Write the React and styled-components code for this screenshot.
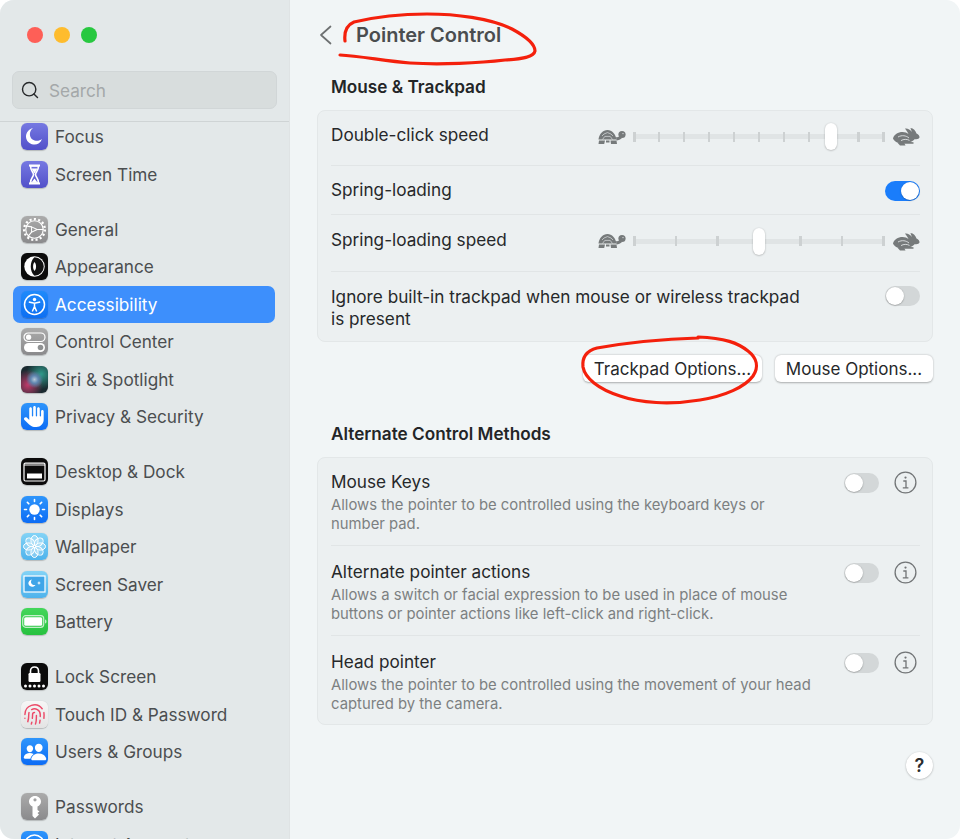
import React from "react";
import styled, { createGlobalStyle } from "styled-components";
import { FaHand } from "react-icons/fa6";
import { IoPeople } from "react-icons/io5";
import { Fingerprint, Search as SearchGlyph } from "lucide-react";

const GlobalStyle = createGlobalStyle`
    html, body {
        margin: 0;
        padding: 0;
        background: #ffffff;
    }
    * {
        box-sizing: border-box;
    }
`;

/// Window ///

const Window = styled.div`
    position: relative;
    width: 960px;
    height: 839px;
    display: flex;
    overflow: hidden;
    border-radius: 14px;
    font-family: Inter, "Liberation Sans", sans-serif;
    background: #f1f5f6;
`;

const Sidebar = styled.aside`
    width: 290px;
    flex: none;
    display: flex;
    flex-direction: column;
    background: #e3e8e9;
    border-right: 1px solid #dfe3e4;
`;

const TrafficLights = styled.div`
    display: flex;
    gap: 11px;
    padding: 27px 0 0 27px;
    height: 71px;
`;

const Light = styled.span`
    width: 16px;
    height: 16px;
    border-radius: 50%;
    background: ${(p) => p.$color};
`;

const SearchBox = styled.div`
    margin: 0 12px;
    width: 265px;
    height: 38px;
    display: flex;
    align-items: center;
    gap: 9px;
    padding-left: 7px;
    background: #d8dddd;
    border: 1px solid #d1d6d7;
    border-radius: 7px;
    color: #a4a8a9;
    font-size: 17.2px;
`;

const SidebarList = styled.nav`
    flex: 1;
    min-height: 0;
    margin-top: 12px;
    overflow: hidden;
    border-top: 1px solid #cfd4d5;
    padding: 0 14px 0 13px;
`;

const Group = styled.div`
    margin-bottom: 17.5px;
    &:first-child {
        margin-top: -3.8px;
    }
`;

const Item = styled.div`
    height: 37.5px;
    display: flex;
    align-items: center;
    gap: 7px;
    padding-left: 8px;
    border-radius: 7px;
    font-size: 17.2px;
    color: ${(p) => (p.$active ? "#ffffff" : "#4b4e50")};
    background: ${(p) => (p.$active ? "#3d8ffc" : "transparent")};
`;

const AppIcon = styled.span`
    width: 27px;
    height: 27px;
    flex: none;
    display: flex;
    align-items: center;
    justify-content: center;
    border-radius: 6px;
    color: #ffffff;
    background: ${(p) => p.$bg};
    box-shadow: 0 0.5px 1px rgba(0, 0, 0, 0.2);
`;

/// Main pane ///

const Main = styled.main`
    flex: 1;
    min-width: 0;
    padding: 0 27px 0 27px;
`;

const TitleBar = styled.header`
    height: 69px;
    margin-bottom: 7px;
    display: flex;
    align-items: center;
    gap: 24px;
    padding-left: 2px;
`;

const Title = styled.h1`
    margin: 0;
    font-size: 20px;
    font-weight: 600;
    color: #4a4d4f;
`;

const SectionTitle = styled.h2`
    margin: 0 0 ${(p) => p.$gap}px 14px;
    font-size: 17.2px;
    line-height: 22px;
    font-weight: 600;
    color: #232527;
`;

const Card = styled.section`
    background: #ecf0f1;
    border: 1px solid #e3e7e8;
    border-radius: 8px;
    padding: 0 12px 0 13px;
`;

const Row = styled.div`
    height: ${(p) => p.$height}px;
    display: flex;
    justify-content: space-between;
    align-items: ${(p) => (p.$top ? "flex-start" : "center")};
    padding-top: ${(p) => p.$pad || 0}px;
    padding-bottom: ${(p) => p.$lift || 0}px;
    border-bottom: ${(p) => (p.$last ? "none" : "1px solid #e1e5e6")};
`;

const RowLabel = styled.div`
    font-size: 17.2px;
    line-height: 22px;
    color: #26282a;
    width: ${(p) => p.$width || "auto"};
    margin-bottom: ${(p) => p.$raise || 0}px;
`;

const RowDesc = styled.div`
    margin-top: 3px;
    font-size: 14.85px;
    line-height: 18.5px;
    color: #7c8081;
    width: 490px;
`;

const SliderWrap = styled.div`
    display: flex;
    align-items: center;
    gap: 7px;
    color: #767a7b;
`;

const Slider = styled.div`
    position: relative;
    width: 252px;
    height: 27px;
    display: flex;
    align-items: center;
    justify-content: space-between;
    &::before {
        content: "";
        position: absolute;
        left: 0;
        right: 0;
        top: 11px;
        height: 5px;
        background: #e0e4e5;
    }
`;

const Tick = styled.span`
    position: relative;
    width: 2.5px;
    height: 10px;
    background: #cdd1d2;
`;

const Thumb = styled.span`
    position: absolute;
    top: 0;
    width: 12px;
    height: 27px;
    margin-left: -6px;
    border-radius: 6px;
    background: #ffffff;
    box-shadow: 0 0.5px 2px rgba(0, 0, 0, 0.3);
`;

const Toggle = styled.span`
    width: 35px;
    height: 20px;
    flex: none;
    display: flex;
    justify-content: ${(p) => (p.$on ? "flex-end" : "flex-start")};
    padding: 1px;
    margin-top: ${(p) => (p.$on ? 2 : 0)}px;
    border-radius: 10px;
    background: ${(p) => (p.$on ? "#1a7dfb" : "#d3d7d8")};
    &::after {
        content: "";
        width: 18px;
        height: 18px;
        border-radius: 50%;
        background: #ffffff;
        box-shadow: 0 0.5px 1.5px rgba(0, 0, 0, 0.35);
    }
`;

const Controls = styled.div`
    display: flex;
    align-items: center;
    gap: 15px;
    margin-right: 3px;
`;

const ButtonRow = styled.div`
    display: flex;
    justify-content: flex-end;
    gap: 13px;
    margin-top: 13px;
    margin-bottom: 41px;
`;

const Button = styled.button`
    height: 27px;
    width: ${(p) => p.$width}px;
    padding: 0;
    border: none;
    border-radius: 6px;
    background: #ffffff;
    box-shadow: 0 0.5px 2px rgba(0, 0, 0, 0.3);
    font-family: inherit;
    font-size: 17px;
    color: #26282a;
`;

const HelpButton = styled.button`
    position: absolute;
    left: 906px;
    top: 752px;
    width: 27px;
    height: 27px;
    padding: 0;
    border: none;
    border-radius: 50%;
    background: #ffffff;
    box-shadow: 0 0.5px 2px rgba(0, 0, 0, 0.3);
    font-family: inherit;
    font-size: 18px;
    font-weight: 600;
    color: #2a2c2e;
`;

const Scribble = styled.svg`
    position: absolute;
    left: 0;
    top: 0;
    pointer-events: none;
`;

/// Drawn icons ///

const BackIcon = () => (
    <svg width="13" height="20" viewBox="0 0 13 20" fill="none" stroke="#6d7071" strokeWidth="1.7" strokeLinecap="round" strokeLinejoin="round">
        <path d="M11.5 1.5 L2 10 L11.5 18.5" />
    </svg>
);

const Turtle = () => (
    <svg width="29" height="16" viewBox="0 0 29 16" fill="currentColor">
        <path d="M1.5 10.5 C2 5 6 1 10.5 1 C15 1 18.5 5 19.5 10.5 Z" />
        <circle cx="25" cy="5.5" r="3.6" />
        <path d="M19 8 C20.5 8.5 22 8 23 7 L25 9 C23.5 10.5 21.5 11.5 19.5 11.5 Z" />
        <path d="M2 11.5 H8 L7.2 15 H1.5 Z M13.5 11.5 H19.5 L20 15 H14 Z M9 11.5 H12.5 V13.5 H9 Z" />
        <path d="M7.8 7.4 L5.5 10.5 M13.2 7.4 L15.5 10.5 M7.8 7.4 H13.2 M7 5 L5 7 M14 5 L16 7 M7 5 L10.5 3.6 L14 5" stroke="#ecf0f1" strokeWidth="0.6" fill="none" />
        <circle cx="26" cy="4.6" r="0.6" fill="#ecf0f1" />
    </svg>
);

const Rabbit = () => (
    <svg width="28" height="19" viewBox="0 0 28 19" fill="currentColor">
        <path d="M1 11.5 C2 7.5 6 5 10.5 5 C13 5 15 5.7 16.5 7 C15.5 5 14 3 13 1.5 C15.5 1 18 2.5 20 5 C19.5 3.5 18.5 2 18.5 1 C21.5 1.2 23.5 3.8 24.5 6.5 C26.5 7.5 27.8 9 27.5 10.5 C27 12 24.5 12.2 22.5 12.2 C21.5 13.7 19.5 14.7 18 15 L21.5 15.2 L21.5 16.8 L12 16.8 C7 16.8 2.5 15 1 11.5 Z" />
        <path d="M5.5 15.8 H12 L13.5 18.5 H8 Z" />
        <path d="M6 10 C10 7.8 14 8.5 17 11 M9 13.6 C11.5 12 15 12 17.5 13.4" stroke="#ecf0f1" strokeWidth="0.8" fill="none" />
    </svg>
);

const InfoIcon = () => (
    <svg width="23" height="23" viewBox="0 0 23 23" fill="none" stroke="#727577" strokeWidth="1.3">
        <circle cx="11.5" cy="11.5" r="10.4" />
        <circle cx="11.5" cy="6.6" r="1.1" fill="#727577" stroke="none" />
        <path d="M9.3 10 H12 V16.6 M8.8 16.8 H14.4" />
    </svg>
);

const Moon = () => (
    <svg width="21" height="21" viewBox="0 0 21 21" fill="#fff">
        <path d="M9 2 C5 5 5 11 8.5 13.5 C11.5 15.5 15.5 15 18 13 C16.5 17 13 19 9.5 18.5 C5 18 2 14.5 2 10.5 C2 6.5 5 3 9 2 Z" />
    </svg>
);

const Hourglass = () => (
    <svg width="19" height="21" viewBox="0 0 19 21" fill="none" stroke="#fff" strokeWidth="1.6">
        <path d="M4 1.5 H15 M4 19.5 H15" strokeWidth="2" />
        <path d="M5.5 2 C5.5 7 8.5 8 8.5 10.5 C8.5 13 5.5 14 5.5 19 H13.5 C13.5 14 10.5 13 10.5 10.5 C10.5 8 13.5 7 13.5 2 Z" />
        <path d="M6.5 4.5 H12.5 L9.5 9.5 Z M6.5 18.5 L9.5 14.5 L12.5 18.5 Z" fill="#fff" stroke="none" />
    </svg>
);

const Gear = () => (
    <svg width="25" height="25" viewBox="0 0 24 24" fill="none" stroke="#fff">
        <circle cx="12" cy="12" r="10" strokeWidth="2.2" strokeDasharray="2 2.2" />
        <circle cx="12" cy="12" r="8.4" strokeWidth="1.1" />
        <path d="M9.2 9.5 L14.6 12 L9.2 14.5 Z" strokeWidth="1" />
        <path d="M3.8 8.5 L9.2 9.5 M9.2 14.5 L5.5 18.8 M14.6 12 H20.4" strokeWidth="1.1" />
    </svg>
);

const AppearanceGlyph = () => (
    <svg width="23" height="23" viewBox="0 0 23 23">
        <circle cx="11.5" cy="11.5" r="10.2" fill="#fff" />
        <path d="M11.5 2.2 A9.3 9.3 0 0 1 11.5 20.8 C6.5 17 6.5 6 11.5 2.2 Z" fill="#111" />
        <path d="M11.5 7 C9.6 9 9.6 14 11.5 16 C13.6 14 13.6 9 11.5 7 Z" fill="#fff" />
    </svg>
);

const AccessGlyph = () => (
    <svg width="23" height="23" viewBox="0 0 23 23" fill="none" stroke="#fff">
        <circle cx="11.5" cy="11.5" r="10" strokeWidth="1.5" />
        <circle cx="11.5" cy="6.5" r="1.7" fill="#fff" stroke="none" />
        <path d="M5.8 9 L11.5 10.2 L17.2 9 M11.5 10.2 V13.5 M11.5 13.5 L9.3 18.5 M11.5 13.5 L13.7 18.5" strokeWidth="1.5" />
    </svg>
);

const Switches = () => (
    <svg width="23" height="22" viewBox="0 0 23 22">
        <rect x="1" y="2" width="21" height="8.5" rx="4.2" fill="none" stroke="#fff" strokeWidth="1.2" />
        <circle cx="5.6" cy="6.2" r="2.6" fill="#fff" />
        <rect x="1" y="12" width="21" height="9" rx="4.5" fill="#fff" />
        <circle cx="17.5" cy="16.5" r="2.8" fill="#8f9192" />
    </svg>
);

const Frame = () => (
    <svg width="23" height="20" viewBox="0 0 23 20" fill="none" stroke="#fff" strokeWidth="1.2">
        <rect x="1" y="1" width="21" height="18" rx="1.5" />
        <rect x="1" y="1" width="21" height="3" fill="#fff" fillOpacity="0.5" stroke="none" />
        <rect x="4" y="11.5" width="15" height="5" fill="#fff" stroke="none" />
    </svg>
);

const Sun = () => (
    <svg width="23" height="23" viewBox="0 0 23 23" fill="none" stroke="#fff" strokeWidth="1.6" strokeLinecap="round">
        <circle cx="11.5" cy="11.5" r="5.2" fill="#fff" stroke="none" />
        <path d="M11.5 1.5 V3.5 M11.5 19.5 V21.5 M1.5 11.5 H3.5 M19.5 11.5 H21.5 M4.4 4.4 L5.8 5.8 M17.2 17.2 L18.6 18.6 M4.4 18.6 L5.8 17.2 M17.2 5.8 L18.6 4.4" />
    </svg>
);

const Flower = () => (
    <svg width="25" height="25" viewBox="0 0 25 25" fill="#ffffff" fillOpacity="0.25" stroke="#fff" strokeWidth="1">
        {[0, 45, 90, 135, 180, 225, 270, 315].map((a) => (
            <ellipse key={a} cx="12.5" cy="6.5" rx="3.6" ry="5" transform={`rotate(${a} 12.5 12.5)`} />
        ))}
    </svg>
);

const SaverGlyph = () => (
    <svg width="23" height="18" viewBox="0 0 23 18">
        <rect x="1" y="1" width="21" height="16" fill="#3fa5e8" stroke="#fff" strokeWidth="1.2" />
        <path d="M9 4.5 C7 6.5 8 10.5 12.5 10 C11 12.5 6.5 12.5 5.5 9 C5 7 7 4.8 9 4.5 Z" fill="#fff" />
        <path d="M16 6 l0.6 1.4 l1.4 0.6 l-1.4 0.6 l-0.6 1.4 l-0.6 -1.4 l-1.4 -0.6 l1.4 -0.6 Z" fill="#fff" />
    </svg>
);

const BatteryGlyph = () => (
    <svg width="25" height="13" viewBox="0 0 25 13">
        <rect x="0.7" y="0.7" width="21" height="11.6" rx="3" fill="none" stroke="#fff" strokeOpacity="0.7" strokeWidth="1.2" />
        <rect x="2.2" y="2.2" width="18" height="8.6" rx="1.6" fill="#fff" />
        <path d="M23 4.5 C24 4.8 24.5 5.5 24.5 6.5 C24.5 7.5 24 8.2 23 8.5 Z" fill="#fff" fillOpacity="0.7" />
    </svg>
);

const LockGlyph = () => (
    <svg width="23" height="24" viewBox="0 0 23 24">
        <path d="M7.5 9 V6 C7.5 3.5 9.3 2 11.5 2 C13.7 2 15.5 3.5 15.5 6 V9" fill="none" stroke="#fff" strokeWidth="1.6" />
        <rect x="5.5" y="8" width="12" height="9" rx="1.2" fill="#fff" />
        {[2.5, 7, 11.5, 16, 20.5].map((x) => (
            <circle key={x} cx={x} cy="21" r="1.5" fill="#fff" />
        ))}
    </svg>
);

const KeyGlyph = () => (
    <svg width="18" height="24" viewBox="0 0 18 24" fill="#fff">
        <path fillRule="evenodd" d="M9 1 C12.5 1 15 3.5 15 6.5 C15 9 13.5 10.5 11.5 11.5 V15 L13.5 16.5 L11.5 18 L13 19.5 L9 23.5 L6.5 21 V11.5 C4.5 10.5 3 9 3 6.5 C3 3.5 5.5 1 9 1 Z M9 3.2 A1.6 1.6 0 1 0 9 6.4 A1.6 1.6 0 1 0 9 3.2 Z" />
    </svg>
);

const AtGlyph = () => (
    <svg width="23" height="23" viewBox="0 0 23 23" fill="none" stroke="#fff" strokeWidth="1.6">
        <circle cx="11.5" cy="11.5" r="9.5" />
        <circle cx="11.5" cy="11.5" r="4" />
    </svg>
);

const SearchIcon = styled(SearchGlyph)`
    color: #27292b;
    flex: none;
`;

const FingerIcon = styled(Fingerprint)`
    color: #ec4a68;
`;

const SiriIcon = styled(AppIcon)`
    background:
        radial-gradient(circle at 50% 50%, #b6c8d8 0, #5f86b0 20%, transparent 45%),
        radial-gradient(circle at 25% 70%, #c03a6a 0, transparent 55%),
        radial-gradient(circle at 75% 30%, #2f9a8a 0, transparent 55%),
        #1a2a30;
`;

/// Data ///

const blue = "linear-gradient(#2e95fb, #0c6cf5)";
const indigo = "linear-gradient(#7679e2, #5250c9)";
const gray = "linear-gradient(#ababab, #8a8a8c)";
const sky = "linear-gradient(#83d3f6, #4fb3ec)";

const groups = [
    [
        { label: "Focus", bg: indigo, glyph: <Moon /> },
        { label: "Screen Time", bg: indigo, glyph: <Hourglass /> },
    ],
    [
        { label: "General", bg: gray, glyph: <Gear /> },
        { label: "Appearance", bg: "#0b0b0b", glyph: <AppearanceGlyph /> },
        { label: "Accessibility", bg: "linear-gradient(#1f8afb, #0d6ff2)", glyph: <AccessGlyph />, active: true },
        { label: "Control Center", bg: gray, glyph: <Switches /> },
        { label: "Siri & Spotlight", siri: true },
        { label: "Privacy & Security", bg: blue, glyph: <FaHand size={21} /> },
    ],
    [
        { label: "Desktop & Dock", bg: "#0b0b0b", glyph: <Frame /> },
        { label: "Displays", bg: blue, glyph: <Sun /> },
        { label: "Wallpaper", bg: sky, glyph: <Flower /> },
        { label: "Screen Saver", bg: sky, glyph: <SaverGlyph /> },
        { label: "Battery", bg: "linear-gradient(#43d65a, #27c13f)", glyph: <BatteryGlyph /> },
    ],
    [
        { label: "Lock Screen", bg: "#0b0b0b", glyph: <LockGlyph /> },
        { label: "Touch ID & Password", bg: "linear-gradient(#f6f6f6, #e4e4e4)", glyph: <FingerIcon size={23} strokeWidth={1.5} /> },
        { label: "Users & Groups", bg: blue, glyph: <IoPeople size={24} /> },
    ],
    [
        { label: "Passwords", bg: gray, glyph: <KeyGlyph /> },
        { label: "Internet Accounts", bg: blue, glyph: <AtGlyph /> },
    ],
];

const alternates = [
    {
        title: "Mouse Keys",
        height: 88,
        pad: 13,
        lines: "Allows the pointer to be controlled using the keyboard keys or number pad.",
    },
    {
        title: "Alternate pointer actions",
        height: 90,
        pad: 15,
        lines: "Allows a switch or facial expression to be used in place of mouse buttons or pointer actions like left-click and right-click.",
    },
    {
        title: "Head pointer",
        height: 88,
        pad: 15,
        lines: "Allows the pointer to be controlled using the movement of your head captured by the camera.",
    },
];

const SpeedSlider = ({ ticks, value }) => (
    <SliderWrap>
        <Turtle />
        <Slider>
            {Array.from({ length: ticks }).map((_, i) => (
                <Tick key={i} />
            ))}
            <Thumb style={{ left: value }} />
        </Slider>
        <Rabbit />
    </SliderWrap>
);

const App = () => {
    return (
        <Window>
            <GlobalStyle />
            <Sidebar>
                <TrafficLights>
                    <Light $color="#fe5f57" />
                    <Light $color="#febc2e" />
                    <Light $color="#28c840" />
                </TrafficLights>
                <SearchBox>
                    <SearchIcon size={20} strokeWidth={1.7} />
                    Search
                </SearchBox>
                <SidebarList>
                    {groups.map((group, i) => (
                        <Group key={i}>
                            {group.map((item) => (
                                <Item key={item.label} $active={item.active}>
                                    {item.siri ? <SiriIcon /> : <AppIcon $bg={item.bg}>{item.glyph}</AppIcon>}
                                    {item.label}
                                </Item>
                            ))}
                        </Group>
                    ))}
                </SidebarList>
            </Sidebar>
            <Main>
                <TitleBar>
                    <BackIcon />
                    <Title>Pointer Control</Title>
                </TitleBar>
                <SectionTitle $gap={12}>Mouse &amp; Trackpad</SectionTitle>
                <Card>
                    <Row $height={55} $lift={3}>
                        <RowLabel $raise={4}>Double-click speed</RowLabel>
                        <SpeedSlider ticks={11} value={198} />
                    </Row>
                    <Row $height={49}>
                        <RowLabel>Spring-loading</RowLabel>
                        <Toggle $on />
                    </Row>
                    <Row $height={57} $lift={4}>
                        <RowLabel $raise={2}>Spring-loading speed</RowLabel>
                        <SpeedSlider ticks={7} value={126} />
                    </Row>
                    <Row $height={69} $last $top $pad={14}>
                        <RowLabel $width="475px">Ignore built-in trackpad when mouse or wireless trackpad is present</RowLabel>
                        <Toggle />
                    </Row>
                </Card>
                <ButtonRow>
                    <Button $width={179}>Trackpad Options...</Button>
                    <Button $width={158}>Mouse Options...</Button>
                </ButtonRow>
                <SectionTitle $gap={12}>Alternate Control Methods</SectionTitle>
                <Card>
                    {alternates.map((row, i) => (
                        <Row key={row.title} $height={row.height} $top $pad={row.pad} $last={i === alternates.length - 1}>
                            <div>
                                <RowLabel>{row.title}</RowLabel>
                                <RowDesc>{row.lines}</RowDesc>
                            </div>
                            <Controls>
                                <Toggle />
                                <InfoIcon />
                            </Controls>
                        </Row>
                    ))}
                </Card>
            </Main>
            <HelpButton>?</HelpButton>
            <Scribble width="960" height="839" fill="none" stroke="#f4200c" strokeWidth="3.2" strokeLinecap="round">
                <path d="M345 41 C344 32 347 25 354 22 C375 17 400 14 427 14 C455 14 490 18 512 29 C525 36 535 44 535 51 C534 57 522 59 505 60 C480 63 440 65 410 63 C385 61 360 56 340 55" />
                <path d="M698 338 C665 339 625 343 597 348 C586 351 582 358 583 367 C585 378 598 389 620 396 C640 403 670 405 700 400 C725 396 745 387 753 376 C759 367 757 358 748 351 C738 343 725 338 698 337" />
            </Scribble>
        </Window>
    );
};

export default App;
